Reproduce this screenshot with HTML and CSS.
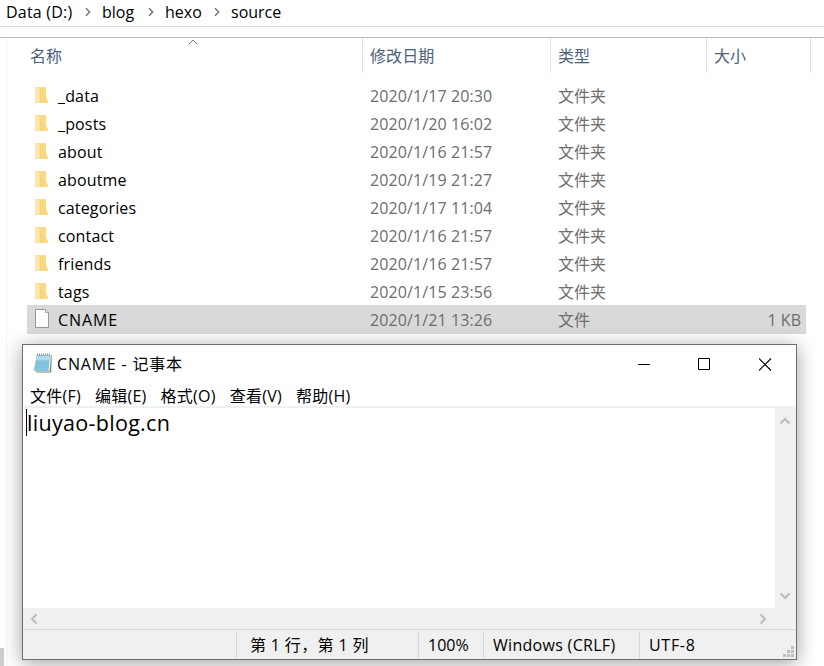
FILE: index.html
```html
<!DOCTYPE html>
<html lang="zh-CN">
<head>
  <meta charset="UTF-8" />
  <title>source</title>
  <meta name="viewport" content="width=device-width, initial-scale=1" />
  <link rel="stylesheet" href="styles.css">
</head>
<body>
  <svg class="defs" width="0" height="0">
    <symbol id="folder" viewBox="0 0 14 18">
      <path d="M.5 1H10q1 0 1 1v10.5l1.5 1.5v3H.5z" fill="#f9dc88"/>
      <path d="M5 1.5h5q1 0 1 1v10l1.5 1.5v3H5z" fill="#f8d883"/>
      <path d="M.5 1.3h1.5L5.2 3v14.2L.5 16z" fill="#fde7a6"/>
      <path d="M5.2 3v14" stroke="#efcb6b" stroke-width=".7"/>
    </symbol>
    <symbol id="chevron" viewBox="0 0 8 10">
      <path d="M2 1.2 5.7 5 2 8.8" fill="none" stroke="currentColor" stroke-width="1.5"/>
    </symbol>
    <symbol id="arrow" viewBox="0 0 12 8">
      <path d="M1.5 6.5 6 2l4.5 4.5" fill="none" stroke="currentColor" stroke-width="2"/>
    </symbol>
  </svg>

  <div class="explorer">
    <div class="path">
      <span class="crumb drive">Data (D:)</span>
      <svg><use href="#chevron"/></svg>
      <span class="crumb blog">blog</span>
      <svg><use href="#chevron"/></svg>
      <span class="crumb hexo">hexo</span>
      <svg><use href="#chevron"/></svg>
      <span class="crumb">source</span>
    </div>

    <div class="content">
      <div class="nav"><div class="nav-thumb"></div></div>
      <div class="files">
        <div class="row head">
          <span class="name">名称
            <svg class="sort" viewBox="0 0 10 6"><path d="M.7 5.3 5 1l4.3 4.3" fill="none" stroke="#777" stroke-width="1"/></svg>
          </span>
          <span class="date">修改日期</span>
          <span class="type">类型</span>
          <span class="size">大小</span>
        </div>
        <div class="row"><span class="name"><svg><use href="#folder"/></svg><b>_data</b></span><span class="date">2020/1/17 20:30</span><span class="type">文件夹</span><span class="size"></span></div>
        <div class="row"><span class="name"><svg><use href="#folder"/></svg><b>_posts</b></span><span class="date">2020/1/20 16:02</span><span class="type">文件夹</span><span class="size"></span></div>
        <div class="row"><span class="name"><svg><use href="#folder"/></svg><b>about</b></span><span class="date">2020/1/16 21:57</span><span class="type">文件夹</span><span class="size"></span></div>
        <div class="row"><span class="name"><svg><use href="#folder"/></svg><b>aboutme</b></span><span class="date">2020/1/19 21:27</span><span class="type">文件夹</span><span class="size"></span></div>
        <div class="row"><span class="name"><svg><use href="#folder"/></svg><b>categories</b></span><span class="date">2020/1/17 11:04</span><span class="type">文件夹</span><span class="size"></span></div>
        <div class="row"><span class="name"><svg><use href="#folder"/></svg><b>contact</b></span><span class="date">2020/1/16 21:57</span><span class="type">文件夹</span><span class="size"></span></div>
        <div class="row"><span class="name"><svg><use href="#folder"/></svg><b>friends</b></span><span class="date">2020/1/16 21:57</span><span class="type">文件夹</span><span class="size"></span></div>
        <div class="row"><span class="name"><svg><use href="#folder"/></svg><b>tags</b></span><span class="date">2020/1/15 23:56</span><span class="type">文件夹</span><span class="size"></span></div>
        <div class="row selected">
          <span class="name">
            <svg class="doc" viewBox="0 0 16 20"><path d="M.5.5h10l3 3v15H.5z" fill="#fcfcfc" stroke="#999"/><path d="M10.5.5v3h3" fill="#eee" stroke="#a5a5a5"/></svg>
            <b>CNAME</b>
          </span>
          <span class="date">2020/1/21 13:26</span><span class="type">文件</span><span class="size">1 KB</span>
        </div>
      </div>
    </div>
  </div>

  <div class="notepad">
    <div class="titlebar">
      <svg class="app-icon" viewBox="0 0 20 20">
        <path d="M4.5 2h14.3l-.6 17.6H3z" fill="#8d8a72"/>
        <path d="M4 2h14l-1.3 16.5H.8z" fill="#e4eff0"/>
        <path d="M3.7 2h13.2l-1.4 16H.8z" fill="#83c5dc"/>
        <path d="M3.6 3h13.2l-.4 4.5H2.9z" fill="#aedce8"/>
        <path d="M3 8h13M2.4 11h13M1.8 14h13" stroke="#74bad4" stroke-width=".6"/>
        <path d="M4.5.5v2M6.5.5v2M8.5.5v2M10.5.5v2M12.5.5v2M14.5.5v2M16.5.5v2" stroke="#7c8a90" stroke-width=".9"/>
      </svg>
      <span class="title">CNAME - 记事本</span>
      <div class="controls">
        <svg viewBox="0 0 13 13"><path d="M1 6.5h12" stroke="#000"/></svg>
        <svg viewBox="0 0 13 13"><path d="M.5.5h11v11H.5z" fill="none" stroke="#000"/></svg>
        <svg viewBox="0 0 13 13"><path d="m0 .5 12 12m0-12-12 12" stroke="#000" stroke-width="1.1"/></svg>
      </div>
    </div>
    <div class="menu">
      <span>文件(F)</span><span>编辑(E)</span><span>格式(O)</span><span>查看(V)</span><span>帮助(H)</span>
    </div>
    <div class="editor">
      <div class="text"><i class="caret"></i>liuyao-blog.cn</div>
      <div class="vscroll">
        <svg><use href="#arrow"/></svg>
        <svg class="down"><use href="#arrow"/></svg>
      </div>
    </div>
    <div class="hscroll">
      <svg class="left"><use href="#arrow"/></svg>
      <svg class="right"><use href="#arrow"/></svg>
    </div>
    <div class="status">
      <span class="pos">第 1 行，第 1 列</span>
      <span class="zoom">100%</span>
      <span class="eol">Windows (CRLF)</span>
      <span class="enc">UTF-8</span>
      <svg class="grip" viewBox="0 0 12 12"><path d="M8 0h3v3H8zM4 4h3v3H4zM8 4h3v3H8zM0 8h3v3H0zM4 8h3v3H4zM8 8h3v3H8z" fill="#bdbdbd"/></svg>
    </div>
  </div>
</body>
</html>
```
FILE: styles.css
```css
* {
  box-sizing: border-box;
}
body {
  margin: 0;
  height: 666px;
  overflow: hidden;
  background: #fff;
  color: #000;
  font-family: 'Open Sans', 'Noto Sans CJK SC', sans-serif;
  font-size: 16px;
  line-height: 24px;
  white-space: nowrap;
}
svg {
  display: block;
  flex: none;
}
.defs {
  position: absolute;
}
.explorer {
  height: 666px;
  display: flex;
  flex-direction: column;
}
.path {
  height: 27px;
  padding-left: 6px;
  display: flex;
  align-items: center;
  padding-bottom: 3px;
  border-bottom: 1px solid #d9d9d9;
}
.path svg {
  width: 8px;
  height: 10px;
  color: #777;
  margin: 0 10px 0 11px;
}
.drive {
  width: 67px;
  letter-spacing: 0.2px;
}
.blog {
  width: 34px;
}
.hexo {
  width: 37px;
}
.content {
  flex: 1;
  margin-top: 10px;
  border-top: 1px solid #b9b9b9;
  display: flex;
}
.nav {
  width: 7px;
  border-right: 1px solid #f3f3f3;
  display: flex;
  align-items: flex-end;
}
.nav-thumb {
  width: 4px;
  height: 18px;
  background: #cdcdcd;
}
.files {
  width: 804px;
  padding-right: 5px;
}
.row {
  display: grid;
  grid-template-columns: 336px 188px 156px 99px;
  margin-left: 20px;
  height: 28px;
  align-items: center;
  color: #6d6d6d;
}
.row .name {
  display: flex;
  align-items: center;
  padding-left: 8px;
}
.row .name svg {
  width: 14px;
  height: 18px;
  margin-right: 9px;
  margin-top: -2px;
}
.row .name b {
  font-weight: normal;
  color: #000;
  letter-spacing: 0.15px;
}
.row .date,
.row .type {
  padding-left: 7px;
}
.row .date {
  letter-spacing: 0.1px;
}
.row .size {
  text-align: right;
  padding-right: 5px;
}
.row.head {
  grid-template-columns: 336px 188px 156px 104px;
  height: 35px;
  margin-bottom: 9px;
  margin-right: -5px;
  color: #4c607a;
}
.head span {
  height: 35px;
  line-height: 36px;
  border-right: 1px solid #e2e2e2;
}
.row.head .name {
  padding-left: 3px;
}
.row.head .size {
  text-align: left;
  padding-left: 7px;
}
.row.head .sort {
  width: 10px;
  height: 6px;
  margin: 0 0 28px 126px;
}
.row.selected {
  height: 29px;
  margin-top: -1px;
  background: #d9d9d9;
}
.row.selected .doc {
  width: 16px;
  height: 20px;
  margin-right: 7px;
}
.row.selected b {
  letter-spacing: 0.9px;
}

/* notepad window */
.notepad {
  position: absolute;
  left: 22px;
  top: 344px;
  width: 775px;
  height: 316px;
  display: flex;
  flex-direction: column;
  background: #fff;
  border: 1px solid #6e6e6e;
  box-shadow: 0 3px 18px rgba(0, 0, 0, 0.38);
}
.titlebar {
  height: 38px;
  padding-left: 10px;
  display: flex;
  align-items: center;
}
.app-icon {
  width: 20px;
  height: 20px;
  margin-top: -2px;
}
.title {
  margin-left: 4px;
  letter-spacing: 0.8px;
}
.controls {
  display: flex;
  gap: 48px;
  margin-left: auto;
  margin-right: 24px;
}
.controls svg {
  width: 13px;
  height: 13px;
}
.menu {
  height: 25px;
  padding: 2px 0 0 7px;
  display: flex;
  gap: 14px;
  align-items: center;
  border-bottom: 2px solid #f0f0f0;
  letter-spacing: 0.25px;
}
.editor {
  flex: 1;
  display: flex;
}
.text {
  flex: 1;
  display: flex;
  padding-left: 3px;
  font-size: 21.5px;
  line-height: 29px;
  letter-spacing: 0.3px;
}
.caret {
  width: 1px;
  height: 27px;
  margin-top: 1px;
  background: #000;
}
.vscroll {
  width: 21px;
  padding: 9px 5px 8px 4px;
  display: flex;
  flex-direction: column;
  justify-content: space-between;
  background: #f0f0f0;
}
.vscroll svg,
.hscroll svg {
  width: 12px;
  height: 8px;
  color: #bcbcbc;
}
.down {
  transform: rotate(180deg);
}
.left {
  transform: rotate(-90deg);
}
.right {
  transform: rotate(90deg);
}
.hscroll {
  height: 21px;
  padding: 0 27px 0 5px;
  display: flex;
  align-items: center;
  justify-content: space-between;
  background: #f0f0f0;
}
.status {
  height: 30px;
  padding-left: 213px;
  display: flex;
  background: #f0f0f0;
  border-top: 1px solid #d7d7d7;
}
.status span {
  height: 27px;
  margin-top: 2px;
  line-height: 26px;
  border-left: 1px solid #d7d7d7;
}
.pos {
  width: 182px;
  padding-left: 13px;
  letter-spacing: 0.35px;
}
.zoom {
  width: 65px;
  padding-left: 9px;
}
.eol {
  width: 156px;
  padding-left: 9px;
  letter-spacing: 0.3px;
}
.enc {
  padding-left: 9px;
  letter-spacing: 0.7px;
}
.grip {
  width: 12px;
  height: 12px;
  margin: auto 1px 1px auto;
}
```
